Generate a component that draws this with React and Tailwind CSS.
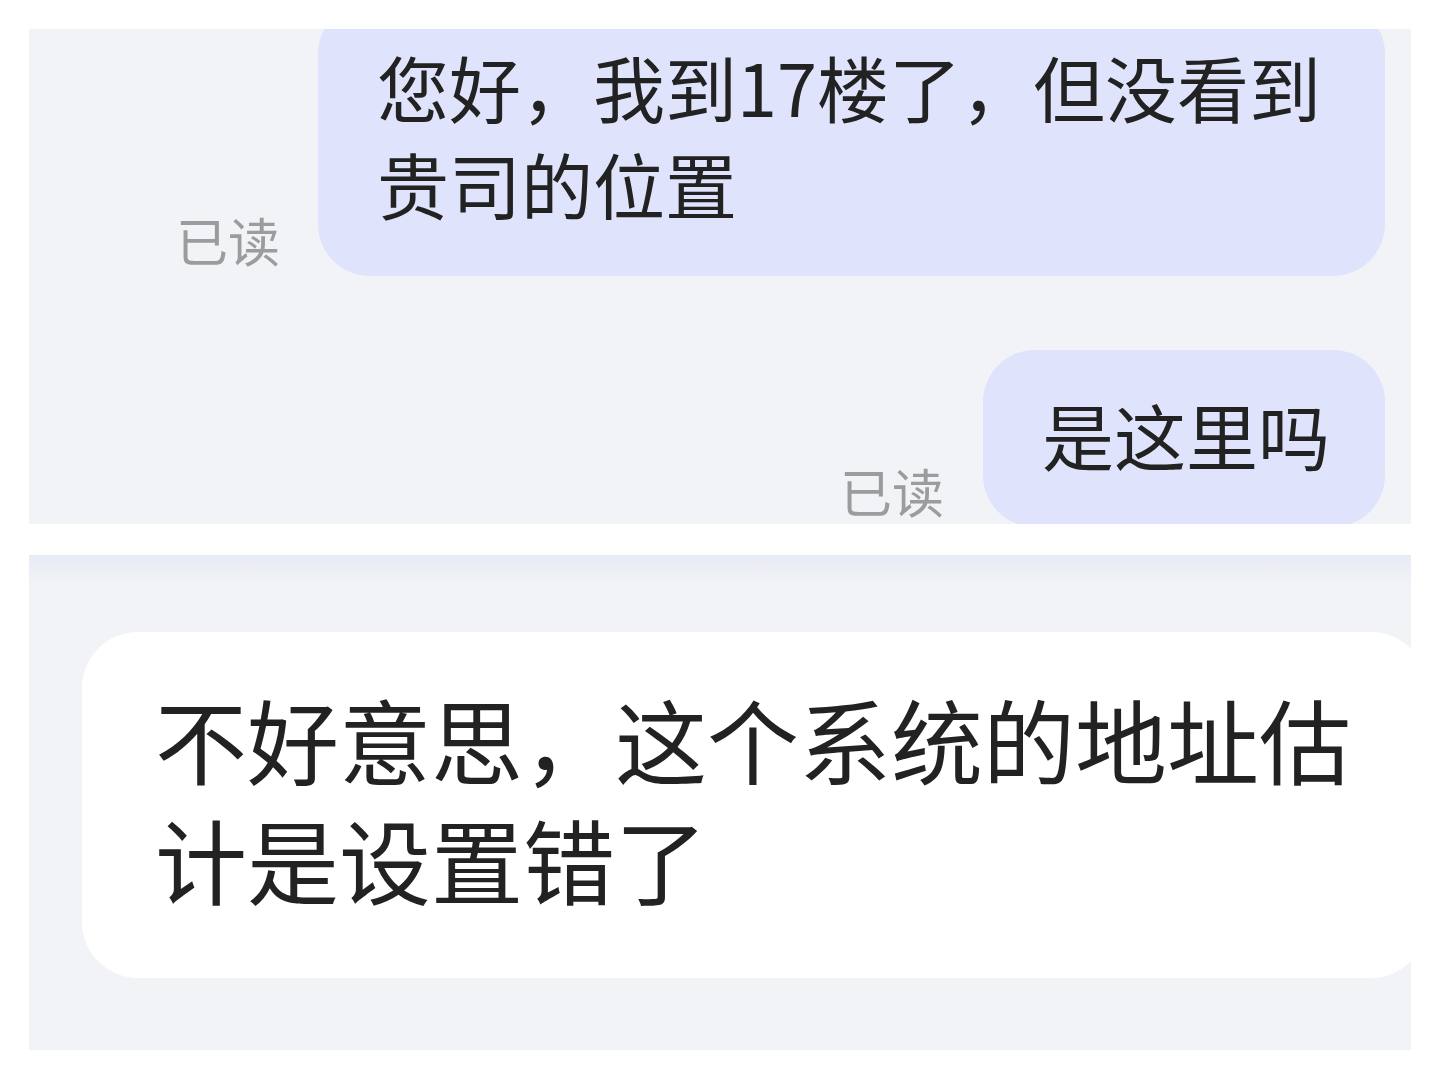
const FONT = { fontFamily: '"Noto Sans CJK SC", "Noto Sans", sans-serif' };

function ReadMark() {
  return (
    <span className="mb-[10px] shrink-0 text-[52px] leading-none text-[#9b9c9e]">已读</span>
  );
}

function SentBubble({ children, className }) {
  return (
    <div
      className={`${className} rounded-[52px] bg-[#dfe3fb] pt-[35px] pb-[45px] pl-[59px] pr-[56px] text-[72px] leading-[97px] text-[#222222]`}
    >
      {children}
    </div>
  );
}

export default function App() {
  return (
    <div className="flex min-h-[1080px] w-[1440px] flex-col bg-white pt-[29px]" style={FONT}>
      {/* sent messages */}
      <div className="mx-[29px] h-[495px] overflow-hidden bg-[#f2f3f7]">
        <div className="-mt-[27px] flex flex-col gap-[74px] pr-[26px]">
          <div className="flex items-end justify-end gap-[38px]">
            <ReadMark />
            <SentBubble className="w-[1067px]">您好，我到17楼了，但没看到贵司的位置</SentBubble>
          </div>
          <div className="flex items-end justify-end gap-[39px]">
            <ReadMark />
            <SentBubble className="w-[402px] whitespace-nowrap">是这里吗</SentBubble>
          </div>
        </div>
      </div>

      {/* received message */}
      <div className="mx-[29px] mt-[31px] h-[495px] overflow-hidden bg-gradient-to-b from-[#e8ebf6] via-[#f2f3f7] via-[6%] to-[#f2f3f7] pt-[77px]">
        <div className="ml-[53px] w-[1345px] rounded-[56px] bg-white pt-[46px] pb-[60px] pl-[73px] pr-[60px] text-[92px] leading-[120px] text-[#222222]">
          不好意思，这个系统的地址估计是设置错了
        </div>
      </div>
    </div>
  );
}
